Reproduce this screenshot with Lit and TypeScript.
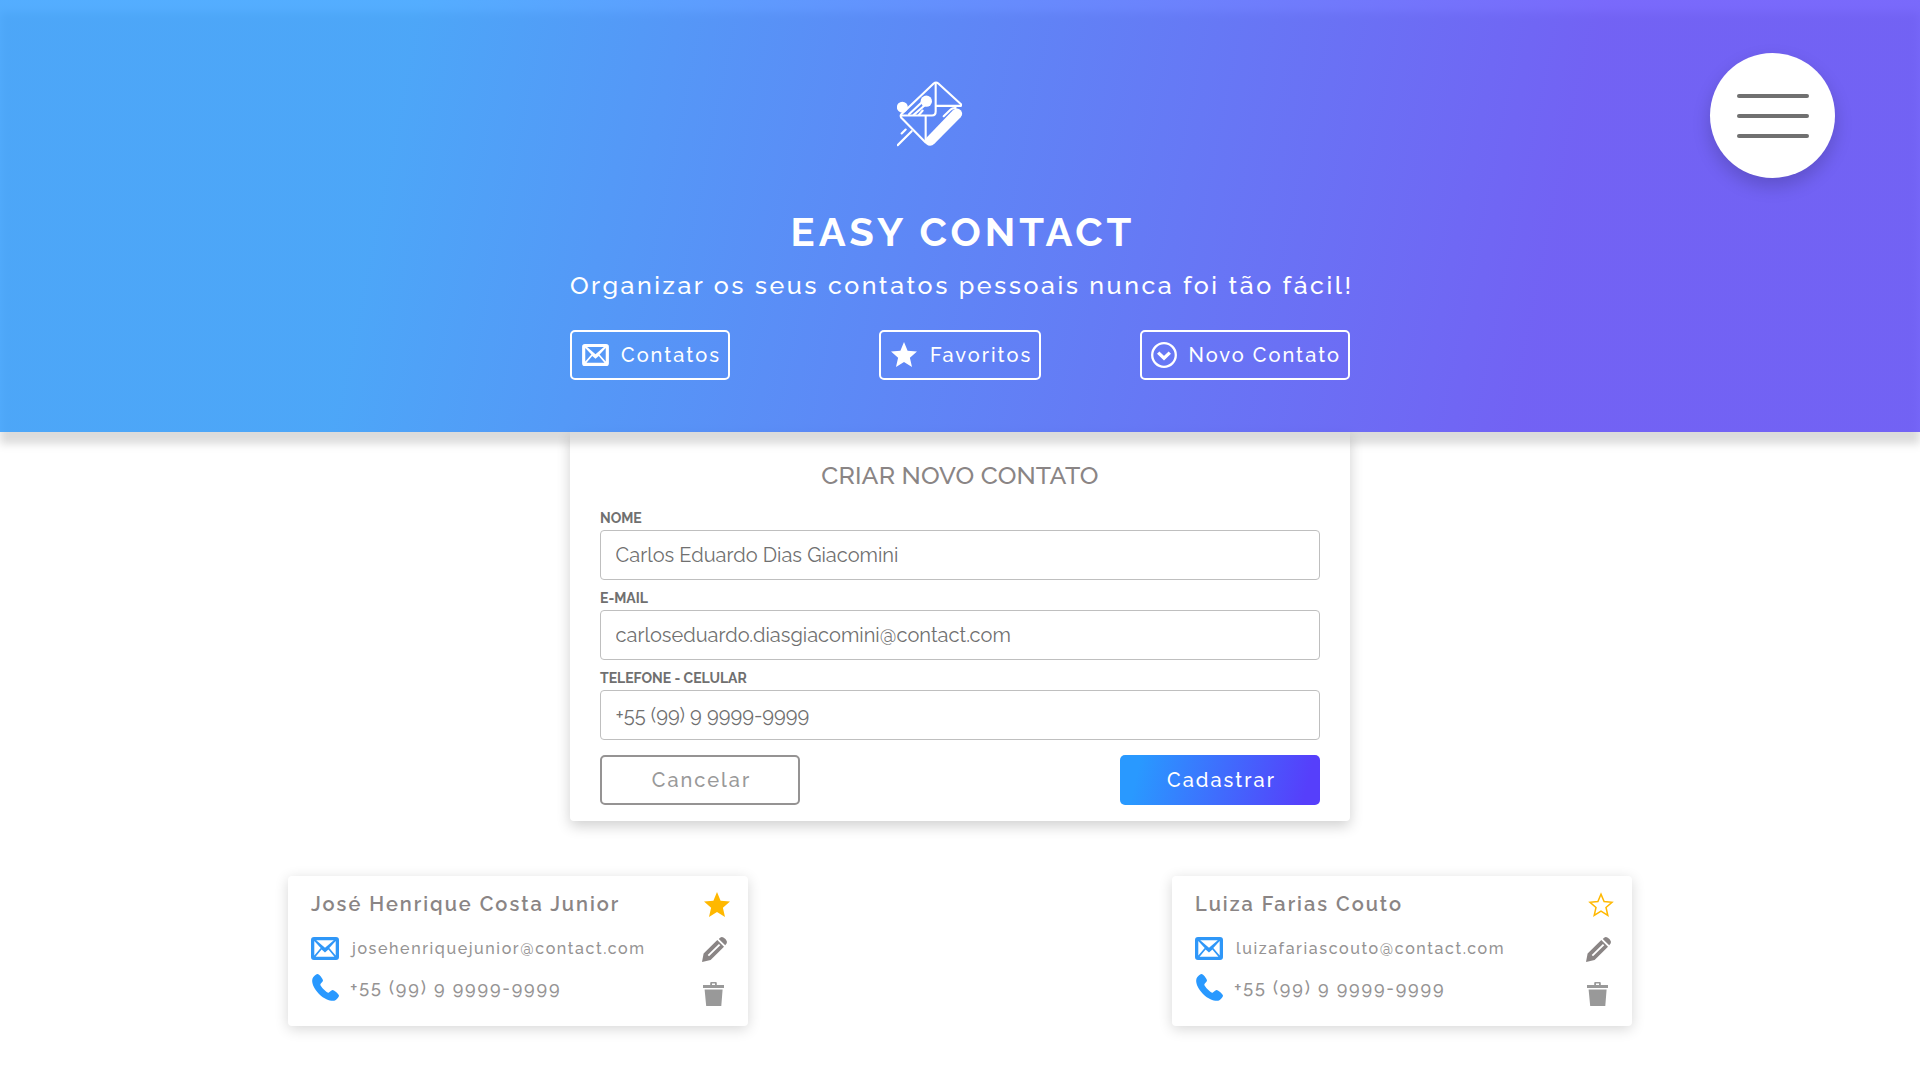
import { LitElement, html, css, svg } from "lit";
import { customElement, property } from "lit/decorators.js";

const mailShape = svg`<path fill="currentColor" fill-rule="evenodd" d="M3 0H25Q28 0 28 3V20Q28 23 25 23H3Q0 23 0 20V3Q0 0 3 0ZM5.2 3.2L14 10.8L22.8 3.2ZM3.3 4.1V18.4L9.7 10.9ZM24.7 4.1V18.4L18.3 10.9ZM4.6 19.7H23.4L17.4 12.6L14 15.4L10.6 12.6Z"/>`;
const starPath = "M13 20.1L21 25L18.9 15.8L26 9.6L16.6 8.8L13 0L9.4 8.8L0 9.6L7.1 15.8L5 25Z";

const icons = {
  mail: html`<svg class="mail" viewBox="0 0 28 23">${mailShape}</svg>`,
  star: html`<svg class="star" viewBox="0 0 26 25"><path fill="currentColor" d=${starPath} /></svg>`,
  starOutline: html`<svg class="star" viewBox="0 0 26 25">
    <path fill="none" stroke="currentColor" stroke-width="1.5" d="M13 19.1L19.8 23.3L18 15.5L24 10.3L16.1 9.6L13 2.1L9.9 9.6L2 10.3L8 15.5L6.2 23.3Z"/></svg>`,
  chevron: html`<svg class="chevron" viewBox="0 0 26 26" fill="none" stroke="currentColor">
    <circle cx="13" cy="13" r="11.8" stroke-width="2.3"/><path d="M7.2 10.6L13 16.2L18.8 10.6" stroke-width="3.4"/></svg>`,
  phone: html`<svg class="phone" viewBox="0 0 27 27"><path fill="currentColor" d="M1.2 3.2C2.6 1.4 4.4 0 5.6 0C7 0 11 4.8 11 6.4C11 7.8 8.6 8.8 8.3 10.4C8.1 12.2 14.6 18.9 16.6 18.7C17.8 18.5 19 16.1 20.6 16.1C22.2 16.1 27 20.4 27 21.8C27 23 25 25 23.4 26.2C20.8 27.8 13.6 26.4 7 19.9C.2 13 -1.1 6.2 1.2 3.2Z"/></svg>`,
  pencil: html`<svg class="pencil" viewBox="0 0 25 25"><path fill="currentColor" fill-rule="evenodd" d="M0 25L1.6 16.6L15.3 3L22 9.7L8.6 23.1ZM5.7 18L7 19.3L18.3 8.3L16.9 6.9ZM16.8 1.9L18.1 .7Q19.6 -.5 21.4 .4Q23.8 1.8 24.7 4Q25.3 5.8 24.2 7.1L23.2 8.2Z"/></svg>`,
  trash: html`<svg class="trash" viewBox="0 0 21 24"><path fill="currentColor" fill-rule="evenodd" d="M0 3H7.2V1Q7.2 0 8.2 0H12.8Q13.8 0 13.8 1V3H21V6H0ZM9 1.6V3H12V1.6ZM1.6 7.4H19.6L18.3 24H3.2Z"/></svg>`,
};

@customElement("contact-card")
export class ContactCard extends LitElement {
  @property() name = "";
  @property() email = "";
  @property() phone = "";
  @property({ type: Boolean }) favorite = false;

  static styles = css`
    :host { display: block; }
    .card {
      display: flex; justify-content: space-between; box-sizing: border-box;
      width: 460px; height: 150px; padding: 16px 18px 0 23px;
      border-radius: 4px; background: #fff; box-shadow: 0 3px 14px rgba(0, 0, 0, .16);
      color: #959393; font-weight: 500;
    }
    .name { font-size: 20px; font-weight: 600; line-height: 24px; letter-spacing: 2px; color: #8a8585; }
    .row { display: flex; align-items: flex-start; }
    .mail-row { margin-top: 21px; height: 23px; font-size: 16px; line-height: 24px; letter-spacing: 1.6px; }
    .phone-row { margin-top: 14px; font-size: 18px; line-height: 27px; letter-spacing: 1.8px; }
    svg { display: block; flex: none; }
    .mail { width: 28px; height: 23px; color: #2f97f8; margin-right: 13px; }
    .phone { width: 27px; height: 27px; margin: 0 11px 0 1px; color: #2999ff; }
    .actions { display: flex; flex-direction: column; width: 28px; }
    .star { width: 26px; height: 25px; margin-left: 1.5px; color: #ffb800; }
    .pencil { width: 25px; height: 25px; margin-top: 20px; color: #8a8585; }
    .trash { width: 21px; height: 24px; margin: 20px 0 0 1px; color: #999; }
  `;

  render() {
    return html`<article class="card">
      <div>
        <div class="name">${this.name}</div>
        <div class="row mail-row">${icons.mail}<span>${this.email}</span></div>
        <div class="row phone-row">${icons.phone}<span>${this.phone}</span></div>
      </div>
      <div class="actions">${this.favorite ? icons.star : icons.starOutline}${icons.pencil}${icons.trash}</div>
    </article>`;
  }
}

@customElement("app-root")
export class AppRoot extends LitElement {
  static styles = css`
    :host {
      display: block; height: 1080px; overflow: hidden; background: #fff;
      font-family: Raleway, Lato, "Open Sans", sans-serif;
    }
    header {
      position: relative; z-index: 1; height: 432px; box-sizing: border-box; padding-top: 80px;
      display: flex; flex-direction: column; align-items: center; color: #fff;
    }
    header::before, header::after { content: ""; position: absolute; }
    header::before { inset: 12px 0 -12px; z-index: -2; background: rgba(0, 0, 0, .14); filter: blur(4px); }
    header::after {
      inset: 0; z-index: -1;
      background: linear-gradient(101.5deg, rgba(41, 153, 255, .8) 20.8%, rgba(88, 68, 250, .8) 80%);
    }
    .logo { width: 66px; height: 67px; margin-right: 61px; }
    h1 { margin: 61px 0 0; font-size: 40px; font-weight: 700; line-height: 48px; letter-spacing: 4px; padding-left: 6px; }
    .tagline { margin: 14px 0 30px; width: 780px; white-space: nowrap; font-size: 25px; font-weight: 500; line-height: 30px; letter-spacing: 2.53px; }
    nav { display: grid; grid-template-columns: 160px 162px 210px; column-gap: 149px; width: 780px; }
    nav button:last-child { margin-left: -50px; width: 210px; }
    button {
      display: flex; align-items: center; box-sizing: border-box; height: 50px; margin: 0; padding: 0;
      border: 2px solid; border-radius: 5px; background: none;
      font: 500 20px/24px Raleway, Lato, sans-serif; letter-spacing: 2px; color: #fff; white-space: nowrap;
    }
    nav button { padding-left: 10px; gap: 12px; }
    nav button:nth-child(2) { gap: 13px; }
    nav button:last-child { padding-left: 9px; gap: 11.5px; }
    nav svg { flex: none; }
    .mail { width: 27px; height: 22px; }
    .star { width: 26px; height: 25px; margin-top: -2px; }
    .chevron { width: 26px; height: 26px; }
    .menu {
      position: absolute; left: 1710px; top: 53px; width: 125px; height: 125px; border: 0; border-radius: 50%;
      background: #fff; box-shadow: 0 8px 18px rgba(0, 0, 0, .18);
      display: flex; flex-direction: column; align-items: center; justify-content: center; gap: 16px;
    }
    .menu span { width: 72px; height: 4px; border-radius: 2px; background: #707070; }
    form {
      box-sizing: border-box; width: 780px; height: 389px; margin: 0 auto; padding: 28px 30px 0;
      border-radius: 0 0 4px 4px; background: #fff; box-shadow: 0 5px 14px rgba(0, 0, 0, .19);
    }
    h2 { margin: 0 0 18px; text-align: center; font-size: 25px; font-weight: 500; line-height: 30px; letter-spacing: .1px; color: #8a8585; }
    label { display: block; font-size: 14px; font-weight: 700; line-height: 20px; color: #707070; margin-bottom: 8px; letter-spacing: -.02px; }
    input {
      display: block; box-sizing: border-box; width: 720px; height: 50px; margin-top: 2px; padding: 0 14.5px;
      border: 1px solid #bfbfbf; border-radius: 4px; outline: 0; background: #fff;
      font: 400 20px/24px Raleway, Lato, sans-serif; letter-spacing: .015px; color: #707070;
    }
    .buttons { display: flex; justify-content: space-between; margin-top: 15px; }
    .buttons button { width: 200px; justify-content: center; padding-left: 3px; }
    .cancel { color: #999; border-color: #959393; }
    .submit { border: 0; background: linear-gradient(103deg, #2999ff 10%, #563ffb 92%); }
    .cards { display: flex; justify-content: space-between; padding: 55px 288px 0; }
  `;

  private fields = [
    ["NOME", "Carlos Eduardo Dias Giacomini"],
    ["E-MAIL", "carloseduardo.diasgiacomini@contact.com"],
    ["TELEFONE - CELULAR", "+55 (99) 9 9999-9999"],
  ];

  render() {
    return html`
      <header>
        <svg class="logo" viewBox="36 30 198 200" fill="none" stroke="#fff" stroke-width="6.3" stroke-linecap="round" stroke-linejoin="round">
          <path d="M228 105V102L160 40Q153 34 146 40L49 132Q45 137 49 143L122 217"/>
          <path d="M152 40V124Q152 136 141 136H50M152 107H228M122 138V214"/>
          <path d="M72 132L113 94M86 134L122 103M102 134L113 121M38 225L80 183M50 190L62 178"/>
          <path d="M176 138L197 118Q202 113 212 114"/>
          <circle cx="52" cy="111" r="16.5" fill="#fff" stroke="none"/>
          <circle cx="124" cy="93" r="17" fill="#fff" stroke="none"/>
          <path fill="#fff" stroke="none" d="M203 121Q217 109 227 120Q236 131 227 141L149 220Q136 233 124 222Q116 214 125 202Z"/>
        </svg>
        <h1>EASY CONTACT</h1>
        <div class="tagline">Organizar os seus contatos pessoais nunca foi tão fácil!</div>
        <nav>
          <button>${icons.mail}Contatos</button>
          <button>${icons.star}Favoritos</button>
          <button>${icons.chevron}Novo Contato</button>
        </nav>
        <button class="menu" aria-label="Menu"><span></span><span></span><span></span></button>
      </header>
      <form>
        <h2>CRIAR NOVO CONTATO</h2>
        ${this.fields.map(([label, value]) => html`<label>${label}<input .value=${value} /></label>`)}
        <div class="buttons">
          <button type="button" class="cancel">Cancelar</button>
          <button type="button" class="submit">Cadastrar</button>
        </div>
      </form>
      <section class="cards">
        <contact-card name="José Henrique Costa Junior" email="josehenriquejunior@contact.com" phone="+55 (99) 9 9999-9999" favorite></contact-card>
        <contact-card name="Luiza Farias Couto" email="luizafariascouto@contact.com" phone="+55 (99) 9 9999-9999"></contact-card>
      </section>`;
  }
}
